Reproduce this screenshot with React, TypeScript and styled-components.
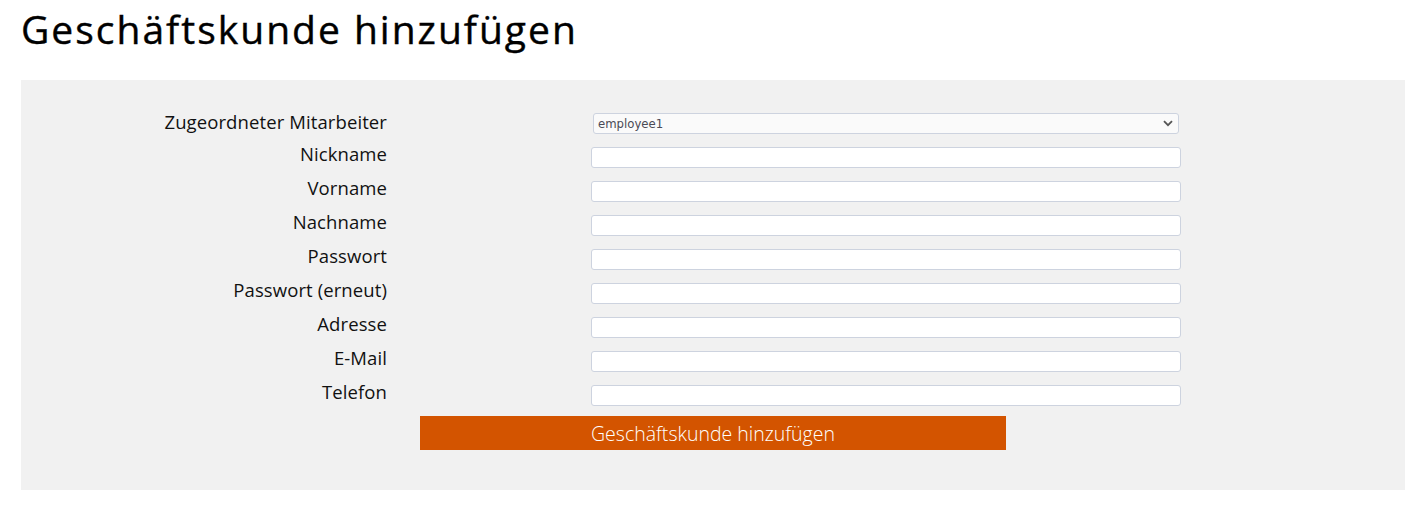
import React from "react";
import styled, { createGlobalStyle } from "styled-components";

const GlobalStyle = createGlobalStyle`
  html, body {
    margin: 0;
    padding: 0;
    background: #ffffff;
    font-family: "Open Sans", "Lato", sans-serif;
    color: #111111;
  }
`;

const Page = styled.div`
  width: 1426px;
  padding: 0 21px;
  box-sizing: border-box;
`;

const Title = styled.h1`
  margin: 0;
  height: 80px;
  padding-top: 4px;
  box-sizing: border-box;
  font-family: "Open Sans", sans-serif;
  font-weight: 400;
  font-size: 39px;
  line-height: 50px;
  letter-spacing: 2px;
  color: #000000;
  -webkit-text-stroke: 0.4px #000000;
`;

const Panel = styled.div`
  width: 1384px;
  height: 410px;
  box-sizing: border-box;
  padding-top: 33px;
  background: #f1f1f1;
`;

const Form = styled.form`
  display: grid;
  grid-template-columns: 366px 590px;
  grid-auto-rows: 21px;
  column-gap: 204px;
  row-gap: 13px;
`;

const Label = styled.label<{ $offset?: number }>`
  text-align: right;
  font-size: 18.5px;
  font-weight: 400;
  line-height: 21px;
  letter-spacing: 0.1px;
  margin-top: ${(p) => p.$offset ?? -4}px;
  white-space: nowrap;
  color: #111111;
`;

const Input = styled.input`
  display: block;
  width: 590px;
  height: 21px;
  box-sizing: border-box;
  margin: 0;
  border: 1px solid #cdd3df;
  border-radius: 3px;
  background: #ffffff;
  padding: 0 4px;
  font-size: 13px;
`;

const SelectWrap = styled.div`
  position: relative;
  margin: 0 2px;
`;

const Select = styled.select`
  display: block;
  width: 586px;
  height: 21px;
  box-sizing: border-box;
  margin: 0;
  appearance: none;
  -webkit-appearance: none;
  border: 1px solid #cdd3df;
  border-radius: 3px;
  background: #fafafa;
  padding: 0 0 0 4px;
  font-family: "DejaVu Sans Condensed", "DejaVu Sans", sans-serif;
  font-size: 13px;
  color: #4a4a55;
`;

const Chevron = styled.svg`
  position: absolute;
  right: 6px;
  top: 7px;
  width: 10px;
  height: 7px;
  pointer-events: none;
`;

const ButtonRow = styled.div`
  display: flex;
  justify-content: center;
  margin-top: 10px;
`;

const SubmitButton = styled.button`
  width: 586px;
  height: 34px;
  border: none;
  background: #d35400;
  color: #ffffff;
  font-family: "Open Sans", sans-serif;
  font-weight: 300;
  font-size: 19.5px;
  padding: 0;
  margin-left: 0;
`;

const fields = [
  "Nickname",
  "Vorname",
  "Nachname",
  "Passwort",
  "Passwort (erneut)",
  "Adresse",
  "E-Mail",
  "Telefon",
];

export default function App() {
  return (
    <>
      <GlobalStyle />
      <Page>
        <Title>Geschäftskunde hinzufügen</Title>
        <Panel>
          <Form onSubmit={(e) => e.preventDefault()}>
            <Label $offset={-2}>Zugeordneter Mitarbeiter</Label>
            <SelectWrap>
              <Select defaultValue="employee1">
                <option value="employee1">employee1</option>
              </Select>
              <Chevron viewBox="0 0 10 7">
                <path d="M1 1.2 L5 5.2 L9 1.2" fill="none" stroke="#555" strokeWidth="1.8" />
              </Chevron>
            </SelectWrap>
            {fields.map((f) => (
              <React.Fragment key={f}>
                <Label>{f}</Label>
                <Input type={f.startsWith("Passwort") ? "password" : "text"} />
              </React.Fragment>
            ))}
          </Form>
          <ButtonRow>
            <SubmitButton type="submit">Geschäftskunde hinzufügen</SubmitButton>
          </ButtonRow>
        </Panel>
      </Page>
    </>
  );
}
